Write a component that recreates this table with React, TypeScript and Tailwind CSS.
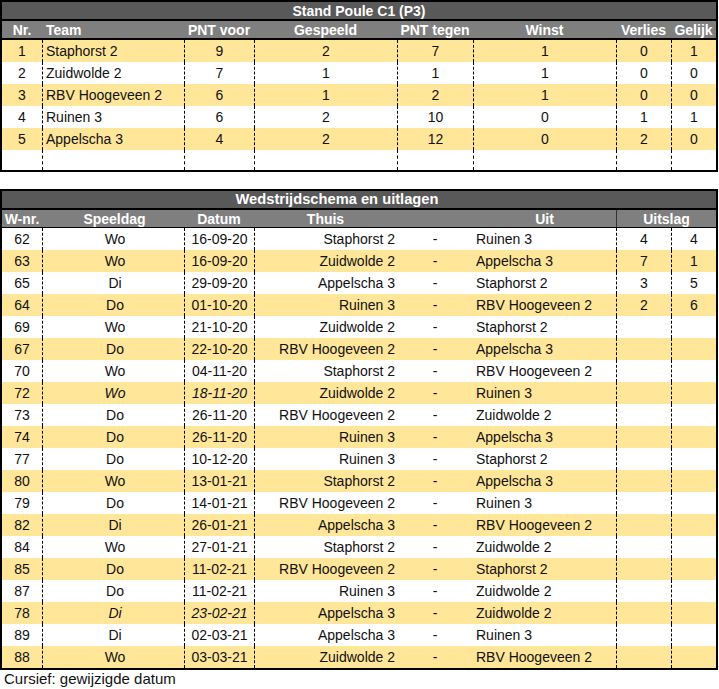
import React from "react";

const GRID =
  "grid grid-cols-[40px_142px_70px_143px_76px_143px_55px_45px]";
const FONT = "font-['Liberation_Sans',Arial,sans-serif]";

type Standing = [string, string, string, string, string, string, string, string];

const standings: Standing[] = [
  ["1", "Staphorst 2", "9", "2", "7", "1", "0", "1"],
  ["2", "Zuidwolde 2", "7", "1", "1", "1", "0", "0"],
  ["3", "RBV Hoogeveen 2", "6", "1", "2", "1", "0", "0"],
  ["4", "Ruinen 3", "6", "2", "10", "0", "1", "1"],
  ["5", "Appelscha 3", "4", "2", "12", "0", "2", "0"],
  ["", "", "", "", "", "", "", ""],
];

type Match = {
  nr: string;
  dag: string;
  datum: string;
  thuis: string;
  uit: string;
  a?: string;
  b?: string;
  italic?: boolean;
};

const matches: Match[] = [
  { nr: "62", dag: "Wo", datum: "16-09-20", thuis: "Staphorst 2", uit: "Ruinen 3", a: "4", b: "4" },
  { nr: "63", dag: "Wo", datum: "16-09-20", thuis: "Zuidwolde 2", uit: "Appelscha 3", a: "7", b: "1" },
  { nr: "65", dag: "Di", datum: "29-09-20", thuis: "Appelscha 3", uit: "Staphorst 2", a: "3", b: "5" },
  { nr: "64", dag: "Do", datum: "01-10-20", thuis: "Ruinen 3", uit: "RBV Hoogeveen 2", a: "2", b: "6" },
  { nr: "69", dag: "Wo", datum: "21-10-20", thuis: "Zuidwolde 2", uit: "Staphorst 2" },
  { nr: "67", dag: "Do", datum: "22-10-20", thuis: "RBV Hoogeveen 2", uit: "Appelscha 3" },
  { nr: "70", dag: "Wo", datum: "04-11-20", thuis: "Staphorst 2", uit: "RBV Hoogeveen 2" },
  { nr: "72", dag: "Wo", datum: "18-11-20", thuis: "Zuidwolde 2", uit: "Ruinen 3", italic: true },
  { nr: "73", dag: "Do", datum: "26-11-20", thuis: "RBV Hoogeveen 2", uit: "Zuidwolde 2" },
  { nr: "74", dag: "Do", datum: "26-11-20", thuis: "Ruinen 3", uit: "Appelscha 3" },
  { nr: "77", dag: "Do", datum: "10-12-20", thuis: "Ruinen 3", uit: "Staphorst 2" },
  { nr: "80", dag: "Wo", datum: "13-01-21", thuis: "Staphorst 2", uit: "Appelscha 3" },
  { nr: "79", dag: "Do", datum: "14-01-21", thuis: "RBV Hoogeveen 2", uit: "Ruinen 3" },
  { nr: "82", dag: "Di", datum: "26-01-21", thuis: "Appelscha 3", uit: "RBV Hoogeveen 2" },
  { nr: "84", dag: "Wo", datum: "27-01-21", thuis: "Staphorst 2", uit: "Zuidwolde 2" },
  { nr: "85", dag: "Do", datum: "11-02-21", thuis: "RBV Hoogeveen 2", uit: "Staphorst 2" },
  { nr: "87", dag: "Do", datum: "11-02-21", thuis: "Ruinen 3", uit: "Zuidwolde 2" },
  { nr: "78", dag: "Di", datum: "23-02-21", thuis: "Appelscha 3", uit: "Zuidwolde 2", italic: true },
  { nr: "89", dag: "Di", datum: "02-03-21", thuis: "Appelscha 3", uit: "Ruinen 3" },
  { nr: "88", dag: "Wo", datum: "03-03-21", thuis: "Zuidwolde 2", uit: "RBV Hoogeveen 2" },
];

const cell = "flex items-center justify-center whitespace-nowrap overflow-visible";
const dash = "border-l border-dashed border-black";

function StandTable() {
  return (
    <div className="w-[718px] border-2 border-black">
      <div className="h-[17px] bg-[#595959] flex items-center justify-center text-white font-bold text-[14px] leading-none border-b-2 border-black box-content">
        Stand Poule C1 (P3)
      </div>
      <div className={`${GRID} h-[17px] bg-[#7f7f7f] text-white font-bold text-[14px] leading-none border-b-2 border-black box-content`}>
        <div className={cell}>Nr.</div>
        <div className={`${cell} justify-start pl-[4px]`}>Team</div>
        <div className={cell}>PNT voor</div>
        <div className={cell}>Gespeeld</div>
        <div className={cell}>PNT tegen</div>
        <div className={cell}>Winst</div>
        <div className={cell}>Verlies</div>
        <div className={cell}>Gelijk</div>
      </div>
      {standings.map((r, i) => (
        <div
          key={i}
          className={`${GRID} ${i === 5 ? "h-[20px]" : "h-[22px]"} text-[14px] leading-none text-[#111] ${
            i % 2 === 0 ? "bg-[#ffe699]" : "bg-white"
          }`}
        >
          <div className={cell}>{r[0]}</div>
          <div className={`${cell} ${dash} justify-start pl-[3px]`}>{r[1]}</div>
          <div className={`${cell} ${dash}`}>{r[2]}</div>
          <div className={`${cell} ${dash}`}>{r[3]}</div>
          <div className={`${cell} ${dash}`}>{r[4]}</div>
          <div className={`${cell} ${dash}`}>{r[5]}</div>
          <div className={`${cell} ${dash}`}>{r[6]}</div>
          <div className={`${cell} ${dash}`}>{r[7]}</div>
        </div>
      ))}
    </div>
  );
}

function ScheduleTable() {
  return (
    <div className="w-[718px] border-2 border-black mt-[17px]">
      <div className="h-[17px] bg-[#595959] flex items-center justify-center pr-[44px] text-white font-bold text-[14.7px] leading-none border-b-2 border-black box-content">
        Wedstrijdschema en uitlagen
      </div>
      <div className={`${GRID} h-[17px] bg-[#7f7f7f] text-white font-bold text-[14px] leading-none border-b border-black box-content`}>
        <div className={cell}>W-nr.</div>
        <div className={`${cell} pl-[3px]`}>Speeldag</div>
        <div className={cell}>Datum</div>
        <div className={cell}>Thuis</div>
        <div className={cell}></div>
        <div className={cell}>Uit</div>
        <div className={`${cell} col-span-2 border-l border-[#333]`}>Uitslag</div>
      </div>
      {matches.map((m, i) => (
        <div
          key={m.nr + i}
          className={`${GRID} h-[22px] text-[14px] leading-none text-[#111] ${
            i % 2 === 1 ? "bg-[#ffe699]" : "bg-white"
          }`}
        >
          <div className={cell}>{m.nr}</div>
          <div className={`${cell} ${dash} pl-[3px] ${m.italic ? "italic" : ""}`}>{m.dag}</div>
          <div className={`${cell} ${dash} ${m.italic ? "italic" : ""}`}>{m.datum}</div>
          <div className={`${cell} ${dash} justify-end pr-[2px]`}>{m.thuis}</div>
          <div className={cell}>-</div>
          <div className={`${cell} justify-start pl-[3px]`}>{m.uit}</div>
          <div className={`${cell} ${dash}`}>{m.a ?? ""}</div>
          <div className={`${cell} ${dash}`}>{m.b ?? ""}</div>
        </div>
      ))}
    </div>
  );
}

export default function App() {
  return (
    <div className={`${FONT} bg-white w-[719px] h-[689px] overflow-hidden`}>
      <StandTable />
      <ScheduleTable />
      <div className="pl-[4px] text-[15px] leading-[18px] text-[#111]">
        Cursief: gewijzigde datum
      </div>
    </div>
  );
}
